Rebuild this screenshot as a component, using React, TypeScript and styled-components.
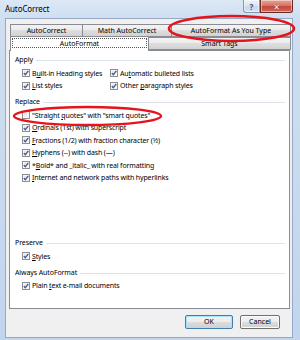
import React from 'react';
import styled, { createGlobalStyle } from 'styled-components';

const GlobalStyle = createGlobalStyle`
  html, body { margin: 0; padding: 0; background: #ffffff; }
  body { font-family: "Noto Sans", "DejaVu Sans", sans-serif; -webkit-font-smoothing: antialiased; }
`;

const Window = styled.div`
  position: relative;
  width: 300px;
  height: 340px;
  box-sizing: border-box;
  display: flex;
  flex-direction: column;
  background: linear-gradient(to bottom, #dde8f5 0px, #cfdef1 18px, #c2d5ee 100%);
  overflow: hidden;
`;

const TitleBar = styled.div`
  height: 18px;
  flex: none;
  display: flex;
  align-items: flex-start;
  padding: 0 7px 0 5px;
`;

const Title = styled.div`
  flex: 1;
  font-size: 8px;
  line-height: 18px;
  letter-spacing: -0.1px;
  color: #000;
`;

const CaptionButton = styled.div<{ $close?: boolean }>`
  height: 13px;
  width: ${(p) => (p.$close ? 33 : 17)}px;
  box-sizing: border-box;
  display: flex;
  align-items: center;
  justify-content: center;
  border: 1px solid ${(p) => (p.$close ? '#6d2a24' : '#8496b0')};
  border-top: none;
  border-radius: ${(p) => (p.$close ? '0 0 3px 0' : '0 0 0 3px')};
  background: ${(p) =>
    p.$close
      ? 'linear-gradient(to bottom, #e7a596 0%, #d6766a 45%, #c4473a 55%, #d0685b 100%)'
      : 'linear-gradient(to bottom, #eef3f9 0%, #dce6f2 45%, #c9d7e9 55%, #d6e2f0 100%)'};
  box-shadow: inset 0 0 0 1px rgba(255, 255, 255, 0.45);
  font-size: 8px;
  font-weight: bold;
  color: ${(p) => (p.$close ? '#ffffff' : '#4a5668')};
  text-shadow: ${(p) => (p.$close ? '0 0 1px #4a120c' : 'none')};
`;

const Client = styled.div`
  flex: 1;
  margin: 0 7px 2px 5px;
  border: 1px solid #97aac4;
  background: #f0f0f0;
  display: flex;
  flex-direction: column;
  padding-top: 6px;
`;

const TabStrip = styled.div`
  display: flex;
  flex-direction: column;
  margin: 0 2px 0 4px;
`;

const TabRow = styled.div<{ $h: number }>`
  display: flex;
  align-items: flex-end;
  height: ${(p) => p.$h}px;
`;

const Tab = styled.div<{ $w?: number; $selected?: boolean }>`
  position: relative;
  box-sizing: border-box;
  ${(p) => (p.$w ? `width: ${p.$w}px; flex: none;` : 'flex: 1;')}
  height: ${(p) => (p.$selected ? 15 : 13)}px;
  margin-bottom: ${(p) => (p.$selected ? -1 : 0)}px;
  z-index: ${(p) => (p.$selected ? 2 : 0)};
  border: 1px solid #898c95;
  border-bottom: ${(p) => (p.$selected ? 'none' : '1px solid #898c95')};
  margin-right: -1px;
  background: ${(p) =>
    p.$selected
      ? '#ffffff'
      : 'linear-gradient(to bottom, #f3f3f3 0%, #ebebeb 50%, #dedede 50%, #d2d2d2 100%)'};
  font-size: 7px;
  line-height: 11px;
  text-align: center;
  color: #000;
  padding: ${(p) => (p.$selected ? '1px 1px 0 1px' : '0')};
`;

const FocusRect = styled.div`
  border: 1px dotted #555;
  height: 10px;
  line-height: 10px;
  box-sizing: border-box;
`;

const Panel = styled.div`
  position: relative;
  z-index: 1;
  box-sizing: border-box;
  height: 259px;
  margin: 0 2px 0 3px;
  border: 1px solid #898c95;
  background: #ffffff;
  display: flex;
  flex-direction: column;
  padding: 3px 4px 16px 5px;
`;

const Group = styled.div<{ $gap?: number }>`
  display: flex;
  flex-direction: column;
  margin-top: ${(p) => p.$gap ?? 0}px;
`;

const GroupHeader = styled.div`
  display: flex;
  align-items: center;
  gap: 3px;
  height: 11px;
  font-size: 7px;
  letter-spacing: -0.1px;
  color: #000;
  &::after {
    content: '';
    flex: 1;
    height: 1px;
    margin-top: 2px;
    background: #dde3ea;
  }
`;

const Rows = styled.div<{ $cols?: boolean }>`
  display: grid;
  grid-template-columns: ${(p) => (p.$cols ? '88px auto' : '1fr')};
  grid-auto-rows: 12.5px;
  padding: 2px 0 0 7px;
`;

const Row = styled.label`
  display: flex;
  align-items: center;
  gap: 2px;
  font-size: 7px;
  letter-spacing: -0.14px;
  color: #000;
  white-space: nowrap;
`;

const Box = styled.span`
  width: 8px;
  height: 8px;
  flex: none;
  box-sizing: border-box;
  border: 1px solid #8e8f8f;
  background: linear-gradient(135deg, #d9dbde 0%, #f0f1f2 60%, #ffffff 100%);
  box-shadow: inset 0 0 0 1px #f6f6f6;
  display: flex;
  align-items: center;
  justify-content: center;
`;

const Spacer = styled.div`
  flex: 1;
`;

const ButtonRow = styled.div`
  display: flex;
  justify-content: flex-end;
  gap: 7px;
  margin-top: 6px;
  padding-right: 12px;
`;

const Button = styled.div<{ $w: number; $default?: boolean }>`
  width: ${(p) => p.$w}px;
  height: 14px;
  box-sizing: border-box;
  border: 1px solid ${(p) => (p.$default ? '#3c7fb1' : '#707070')};
  border-radius: 2px;
  background: linear-gradient(to bottom, #f3f3f3 0%, #ebebeb 50%, #dddddd 50%, #cfcfcf 100%);
  box-shadow: inset 0 0 0 1px ${(p) => (p.$default ? '#a9e3f7' : '#fbfbfb')};
  font-size: 7px;
  line-height: 12px;
  text-align: center;
  color: #000;
`;

const Overlay = styled.svg`
  position: absolute;
  left: 0;
  top: 0;
  width: 300px;
  height: 340px;
  pointer-events: none;
  z-index: 10;
`;

const Check: React.FC<{ on?: boolean }> = ({ on }) => (
  <Box>
    {on && (
      <svg width="6" height="6" viewBox="0 0 6 6">
        <path d="M0.8 3.1 L2.3 4.8 L5.3 0.8" fill="none" stroke="#3f5590" strokeWidth="1.3" />
      </svg>
    )}
  </Box>
);

const Item: React.FC<{ on?: boolean; children: React.ReactNode }> = ({ on, children }) => (
  <Row>
    <Check on={on} />
    <span>{children}</span>
  </Row>
);

export default function App() {
  return (
    <>
      <GlobalStyle />
      <Window>
        <TitleBar>
          <Title>AutoCorrect</Title>
          <CaptionButton>?</CaptionButton>
          <CaptionButton $close>✕</CaptionButton>
        </TitleBar>
        <Client>
          <TabStrip>
            <TabRow $h={12}>
              <Tab $w={73}>AutoCorrect</Tab>
              <Tab $w={90}>Math AutoCorrect</Tab>
              <Tab>AutoFormat As You Type</Tab>
            </TabRow>
            <TabRow $h={13}>
              <Tab $w={139} $selected>
                <FocusRect>AutoFormat</FocusRect>
              </Tab>
              <Tab>Smart Tags</Tab>
            </TabRow>
          </TabStrip>
          <Panel>
            <Group>
              <GroupHeader>Apply</GroupHeader>
              <Rows $cols>
                <Item on>B<u>u</u>ilt-in Heading styles</Item>
                <Item on>Au<u>t</u>omatic bulleted lists</Item>
                <Item on><u>L</u>ist styles</Item>
                <Item on>Other <u>p</u>aragraph styles</Item>
              </Rows>
            </Group>
            <Group $gap={4}>
              <GroupHeader>Replace</GroupHeader>
              <Rows>
                <Item>"Straight <u>q</u>uotes" with "smart quotes"</Item>
                <Item on><u>O</u>rdinals (1st) with superscript</Item>
                <Item on><u>F</u>ractions (1/2) with fraction character (½)</Item>
                <Item on><u>H</u>yphens (--) with dash (—)</Item>
                <Item on>*<u>B</u>old* and _italic_ with real formatting</Item>
                <Item on><u>I</u>nternet and network paths with hyperlinks</Item>
              </Rows>
            </Group>
            <Spacer />
            <Group>
              <GroupHeader>Preserve</GroupHeader>
              <Rows>
                <Item on><u>S</u>tyles</Item>
              </Rows>
            </Group>
            <Group $gap={4}>
              <GroupHeader>Always AutoFormat</GroupHeader>
              <Rows>
                <Item on>Plain <u>t</u>ext e-mail documents</Item>
              </Rows>
            </Group>
          </Panel>
          <ButtonRow>
            <Button $w={48} $default>OK</Button>
            <Button $w={40}>Cancel</Button>
          </ButtonRow>
        </Client>
        <Overlay viewBox="0 0 300 340">
          <ellipse cx="231.5" cy="28.5" rx="62.5" ry="12.5" fill="none" stroke="#e5141c" strokeWidth="2.6" />
          <ellipse cx="87.5" cy="116" rx="73.5" ry="9" fill="none" stroke="#e5141c" strokeWidth="2.4" />
        </Overlay>
      </Window>
    </>
  );
}
